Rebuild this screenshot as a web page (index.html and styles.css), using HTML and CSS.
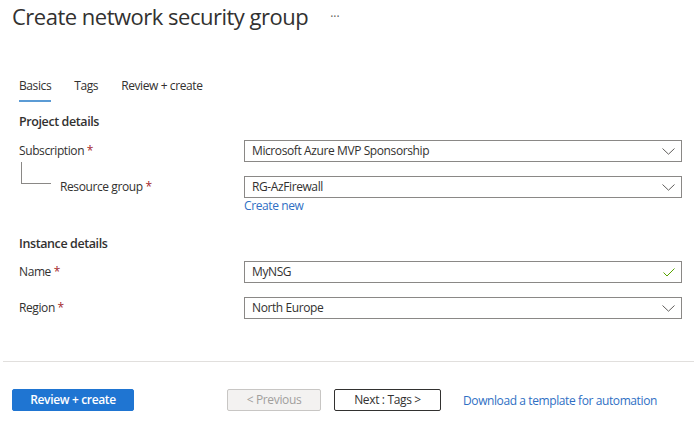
FILE: index.html
```html
<!DOCTYPE html>
<html lang="en">
<head>
<meta charset="utf-8">
<title>Create network security group</title>
<link rel="stylesheet" href="styles.css">
</head>
<body>
<div class="page">
  <header class="header">
    <h1 class="title">Create network security group</h1>
    <span class="more">···</span>
  </header>

  <nav class="tabs">
    <span class="tab active">Basics</span>
    <span class="tab">Tags</span>
    <span class="tab">Review + create</span>
  </nav>

  <section class="section">
    <h2 class="section-title">Project details</h2>
    <div class="row">
      <div class="label">Subscription <span class="req">*</span></div>
      <div class="field">
        <div class="input">
          <span class="value">Microsoft Azure MVP Sponsorship</span>
          <svg class="chev" width="13" height="7" viewBox="0 0 13 7"><path d="M0.5 0.5 L6.5 6.2 L12.5 0.5" fill="none" stroke="#605e5c" stroke-width="1"/></svg>
        </div>
      </div>
    </div>
    <div class="row">
      <div class="label nested"><span class="tree"></span><span>Resource group <span class="req">*</span></span></div>
      <div class="field">
        <div class="input">
          <span class="value">RG-AzFirewall</span>
          <svg class="chev" width="13" height="7" viewBox="0 0 13 7"><path d="M0.5 0.5 L6.5 6.2 L12.5 0.5" fill="none" stroke="#605e5c" stroke-width="1"/></svg>
        </div>
        <a class="link create-new">Create new</a>
      </div>
    </div>

    <h2 class="section-title instance">Instance details</h2>
    <div class="row">
      <div class="label">Name <span class="req">*</span></div>
      <div class="field">
        <div class="input">
          <span class="value">MyNSG</span>
          <svg class="check" width="12" height="9" viewBox="0 0 12 9"><path d="M0.5 4.5 L4 8 L11.5 0.5" fill="none" stroke="#57a300" stroke-width="1"/></svg>
        </div>
      </div>
    </div>
    <div class="row">
      <div class="label">Region <span class="req">*</span></div>
      <div class="field">
        <div class="input">
          <span class="value">North Europe</span>
          <svg class="chev" width="13" height="7" viewBox="0 0 13 7"><path d="M0.5 0.5 L6.5 6.2 L12.5 0.5" fill="none" stroke="#605e5c" stroke-width="1"/></svg>
        </div>
      </div>
    </div>
  </section>

  <div class="separator"></div>

  <footer class="footer">
    <button class="btn primary">Review + create</button>
    <button class="btn disabled">&lt; Previous</button>
    <button class="btn secondary">Next : Tags &gt;</button>
    <a class="link download">Download a template for automation</a>
  </footer>
</div>
</body>
</html>
```

FILE: styles.css
```css
* { box-sizing: border-box; }
html, body { margin: 0; padding: 0; background: #ffffff; }
body {
  font-family: "Open Sans", "Noto Sans", Arial, sans-serif;
  font-size: 12px;
  letter-spacing: -0.4px;
  color: #323130;
  width: 697px;
  height: 425px;
  overflow: hidden;
}
.page { display: flex; flex-direction: column; }

.header {
  display: flex;
  align-items: center;
  height: 32px;
  padding-left: 12px;
}
.title {
  margin: 0;
  font-size: 22px;
  font-weight: 500;
  line-height: 32px;
  letter-spacing: -0.5px;
  color: #323130;
}
.more {
  margin-left: 22px;
  font-size: 12px;
  letter-spacing: 0;
  color: #605e5c;
  line-height: 32px;
  padding-top: 2px;
}

.tabs {
  display: flex;
  gap: 23px;
  margin-top: 38px;
  padding-left: 19px;
}
.tab {
  line-height: 20px;
  padding: 6px 0 4px;
  border-bottom: 2px solid transparent;
}
.tab.active { border-bottom-color: #5b9bd5; }

.section { padding: 0 15px 0 19px; display: flex; flex-direction: column; }
.section-title {
  margin: 10px 0 8px;
  font-size: 12.5px;
  font-weight: 600;
  line-height: 20px;
  color: #323130;
}
.section-title.instance { margin: 20px 0 7px; }

.row { display: flex; align-items: flex-start; }
.row + .row { margin-top: 14px; }
.label {
  width: 225px;
  flex: none;
  line-height: 22px;
  height: 22px;
}
.label.nested { display: flex; }
.req { color: #a4262c; }
.tree {
  display: block;
  width: 30px;
  height: 22px;
  margin: -14px 9px 0 2px;
  border-left: 1px solid #8a8886;
  border-bottom: 1px solid #8a8886;
  flex: none;
}

.field { flex: 1; display: flex; flex-direction: column; }
.input {
  height: 22px;
  border: 1px solid #8a8886;
  display: flex;
  align-items: center;
  padding: 0 6px 0 7px;
}
.value { flex: 1; line-height: 20px; }
.chev, .check { flex: none; }

.link { color: #2f6fc4; cursor: pointer; }
.create-new { line-height: 16px; }

.separator {
  margin: 42px 3px 0;
  height: 1px;
  background: #e1dfdd;
}

.footer {
  display: flex;
  align-items: center;
  padding-left: 12px;
  margin-top: 27px;
}
.btn {
  height: 22px;
  font-family: inherit;
  font-size: 12px;
  letter-spacing: -0.35px;
  padding: 0;
  border-radius: 2px;
  line-height: 20px;
}
.btn.primary {
  width: 122px;
  background: #1f75d2;
  border: 1px solid #1f75d2;
  color: #ffffff;
  font-weight: 600;
}
.btn.disabled {
  width: 94px;
  margin-left: 93px;
  background: #f3f2f1;
  border: 1px solid #c8c6c4;
  color: #a19f9d;
}
.btn.secondary {
  width: 107px;
  margin-left: 13px;
  background: #ffffff;
  border: 1px solid #323130;
  color: #323130;
}
.download { margin-left: 22px; }
```
